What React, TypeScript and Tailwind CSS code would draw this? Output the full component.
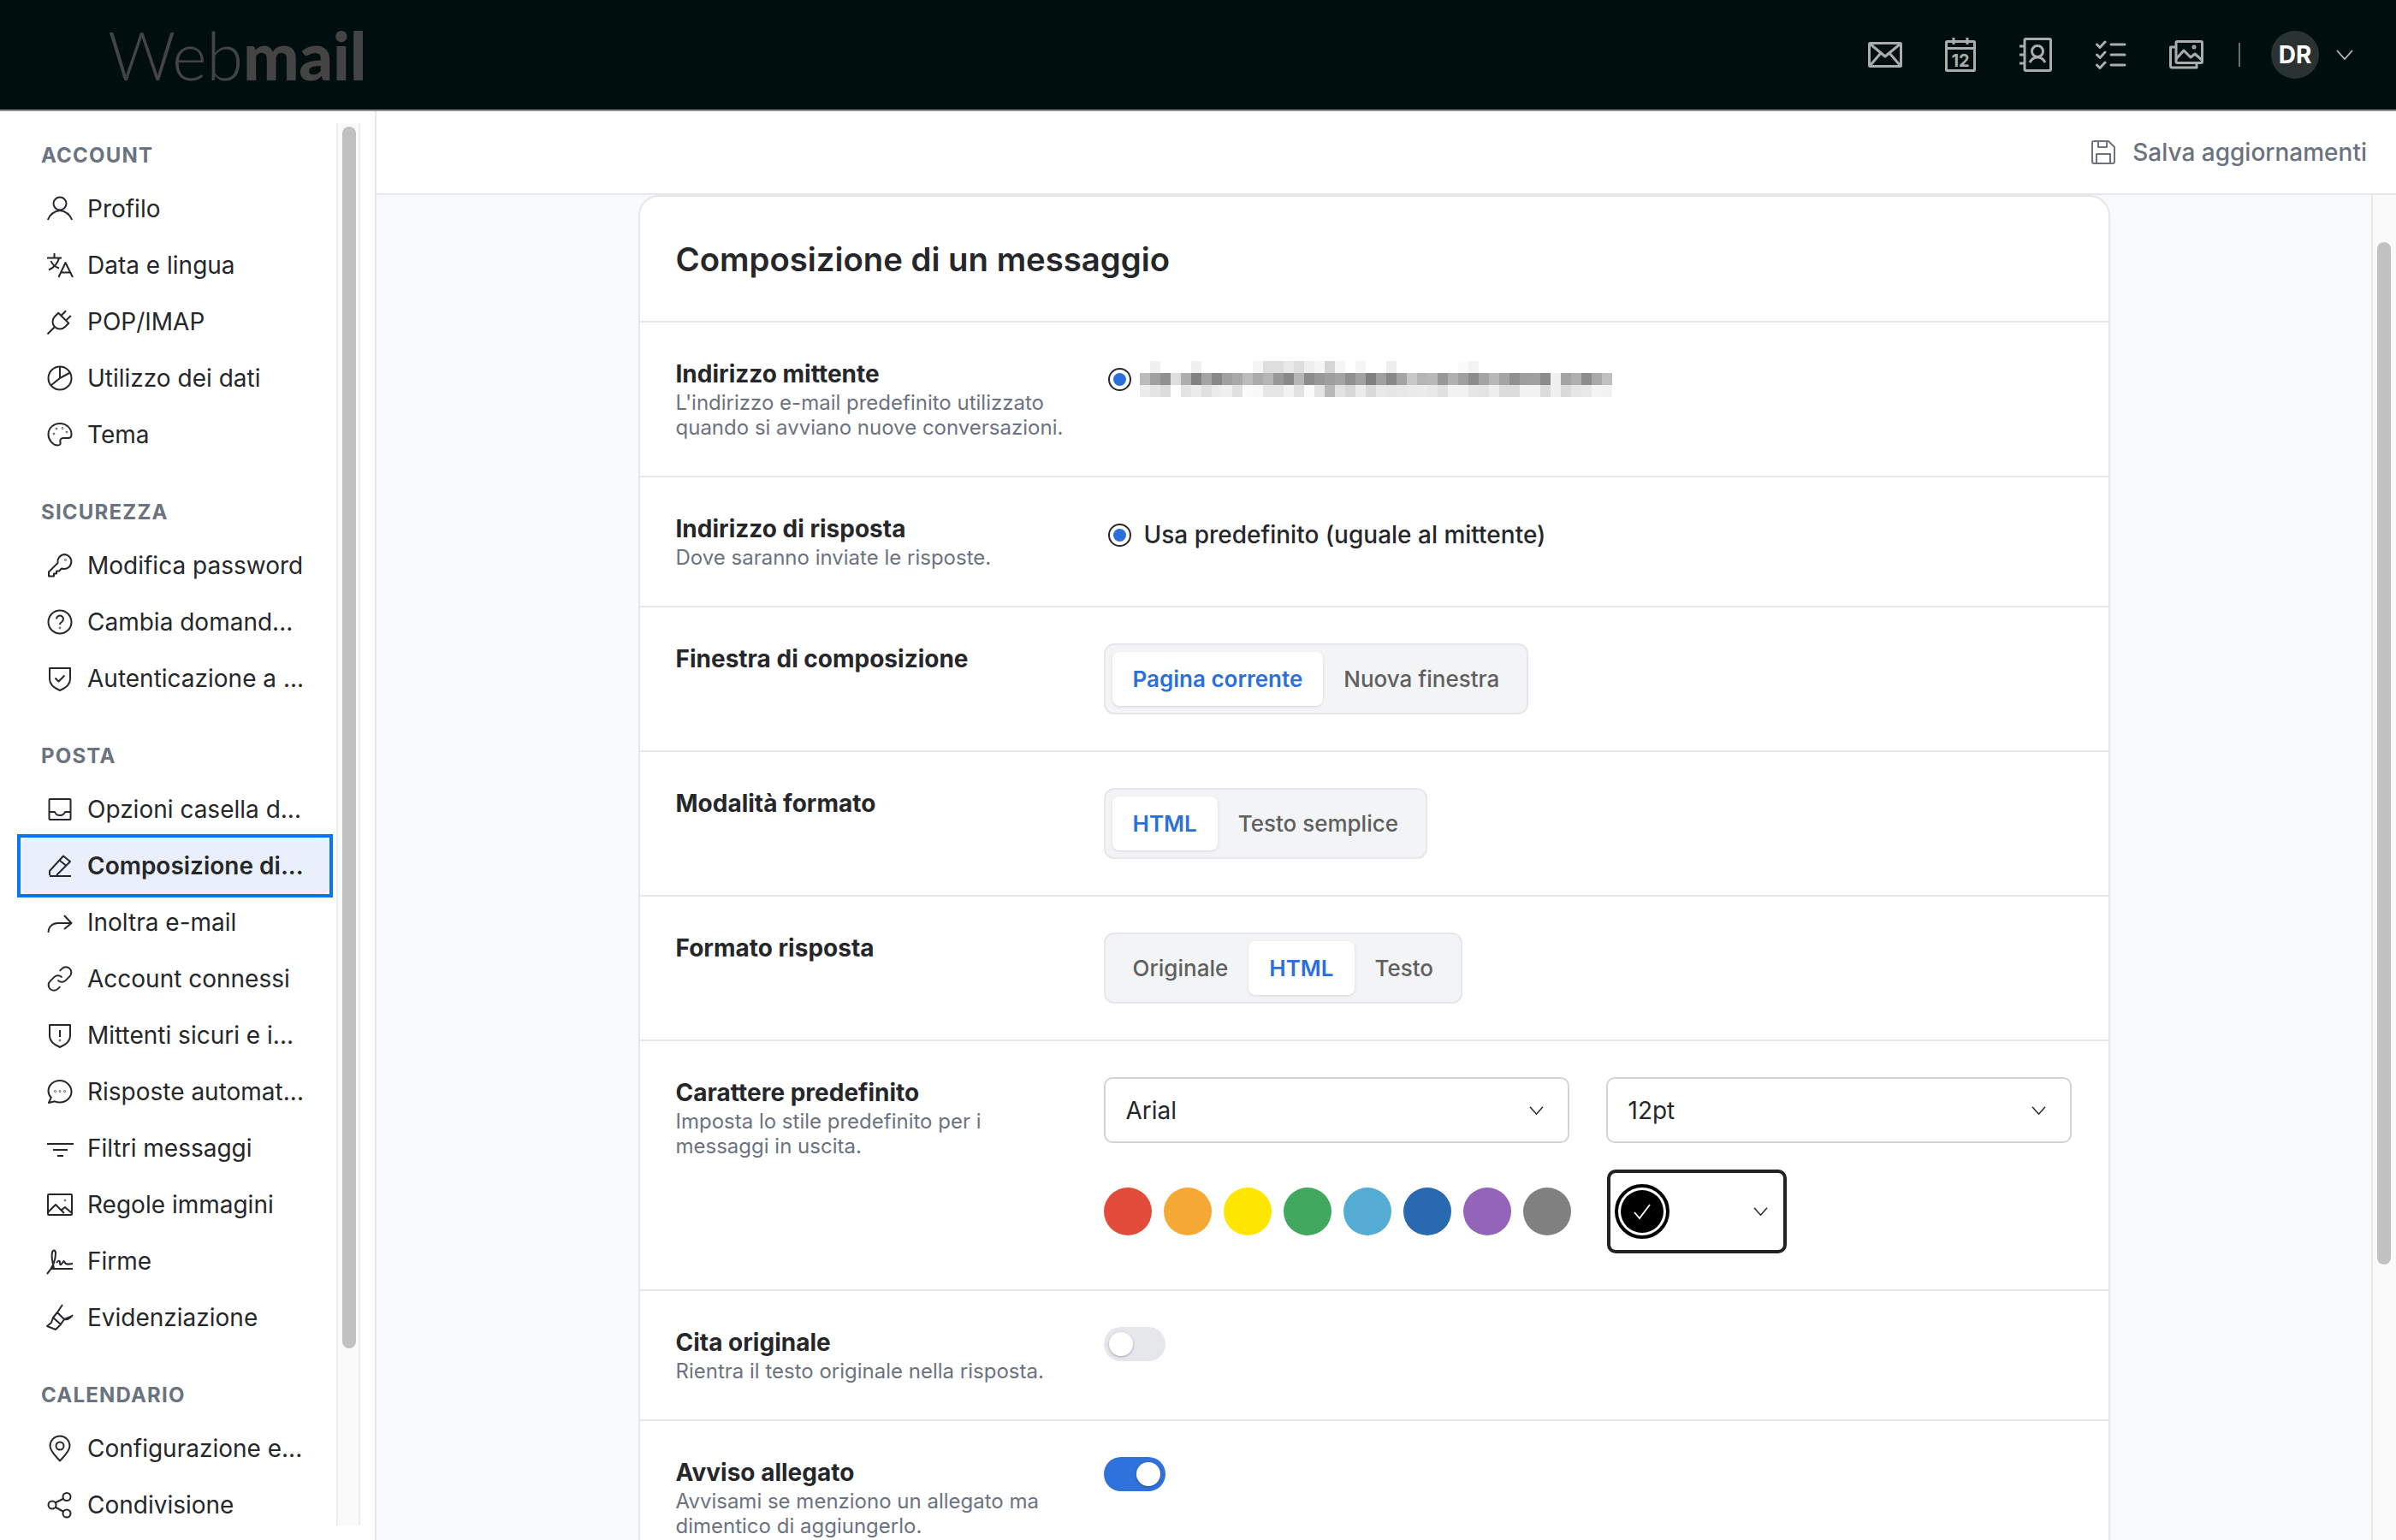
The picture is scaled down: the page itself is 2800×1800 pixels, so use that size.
import type { ReactNode } from 'react'

const icons: Record<string, ReactNode> = {
  user: (
    <>
      <circle cx="15" cy="9" r="7.500" />
      <path d="M1 28C3 22.500 8 18 15 17c7 1 12 5.500 14 11" />
    </>
  ),
  lang: <path d="M0 6.500h17M8.500 1v5.500M14 6.500C12.500 13 8.500 17.500 2 20.500M4.500 10c1.500 4 5 7 9.500 8.500M13.500 29l8-17 8.500 17M16.500 23.500h11" />,
  plug: (
    <g transform="rotate(45 15 15)">
      <path d="M6.500 9h17v6a8.500 8.500 0 0 1-17 0zM11 1v8M19 1v8M15 23.500v12" />
    </g>
  ),
  pie: (
    <>
      <circle cx="15" cy="15" r="13.500" />
      <path d="M15 1.500V15L27 8.500M15 15 4.500 23.500" />
    </>
  ),
  palette: (
    <>
      <path d="M15 2C7.500 2 1.500 7.500 1.500 14.500S7 27.500 12.500 27.500c2.500 0 3.500-1.500 3-3.500-.6-2.500.5-5 3.500-5h6c2.500 0 3.500-2 3.500-4.500C28.500 7.500 22.500 2 15 2z" />
      <circle cx="8" cy="14" r=".3" />
      <circle cx="11" cy="8" r=".3" />
      <circle cx="18" cy="7.500" r=".3" />
      <circle cx="23" cy="12" r=".3" />
    </>
  ),
  key: (
    <>
      <path d="M20 2a8.500 8.500 0 1 1-3 16.500L14 21.500h-3v3H8v3H2v-5l10.500-10.500A8.500 8.500 0 0 1 20 2z" />
      <circle cx="21.500" cy="8.500" r=".3" />
    </>
  ),
  help: (
    <>
      <circle cx="15" cy="15" r="13.500" />
      <path d="M11 11.500a4 4 0 1 1 6 3.500c-1.300.8-2 1.500-2 3" />
      <circle cx="15" cy="22" r=".3" />
    </>
  ),
  shieldCheck: <path d="M3 3h24v13c0 6-5 10-12 13C8 26 3 22 3 16zM9.500 14.500l4 4 7-7" />,
  inbox: (
    <>
      <rect x="2.500" y="3" width="25" height="24" rx="1" />
      <path d="M3 18h6c1 3 3 4 6 4s5-1 6-4h6" />
    </>
  ),
  pencil: <path d="M3 26v-5L19 3.500l8 6.500-16 16M14.500 8.500l8 6.500M3 27h25" />,
  forward: <path d="M1.500 27c0-7 5-11 11-11H28M20 7l8.500 9-8.500 7" />,
  link: <path d="M12.500 16.500a6 6 0 0 0 9 .6l5-5a6.300 6.300 0 0 0-9-9l-2.800 2.800M17.500 13.500a6 6 0 0 0-9-.6l-5 5a6.300 6.300 0 0 0 9 9l2.800-2.800" />,
  shieldAlert: (
    <>
      <path d="M3 3h24v13c0 6-5 10-12 13C8 26 3 22 3 16zM15 9v8" />
      <circle cx="15" cy="21" r=".3" />
    </>
  ),
  chat: (
    <>
      <path d="M15 2C7.500 2 1.500 7.500 1.500 14c0 3 1.200 5.700 3.200 7.800L2 28l7-1.700c1.800.8 3.900 1.200 6 1.200 7.500 0 13.500-5.800 13.500-12.500S22.500 2 15 2z" />
      <circle cx="9.500" cy="14.500" r=".3" />
      <circle cx="15" cy="14.500" r=".3" />
      <circle cx="20.500" cy="14.500" r=".3" />
    </>
  ),
  filter: <path d="M0 10h31M7 17h17M12 24h7" />,
  image: (
    <>
      <rect x="1" y="3" width="28" height="24" rx="1" />
      <path d="M1 24l9-9 10 10M17 21l4-3 8 7" />
      <circle cx="21" cy="10" r=".3" />
    </>
  ),
  sign: <path d="M0 30C7 22 10 15 10 6c0-4-3-5-4-1-1.500 6 1 13 2 19M11 17c2-3 4-3 4 0s1 3 3 0 2-2 3 0 3 2 9 1M4 24h26" />,
  marker: <path d="M18 0l-6 9 8 8 10-4M12 9l-5 6 9 8 4-6M7 15l-2 6-5 4 10 4 3-3 3-3M20 17c3 1 7-1 10-5" />,
  pin: (
    <>
      <path d="M15 29.500C10 24 3.500 18 3.500 12a11.500 11.500 0 0 1 23 0c0 6-6.500 12-11.500 17.500z" />
      <circle cx="15" cy="12" r="4.500" />
    </>
  ),
  share: (
    <>
      <circle cx="6" cy="15" r="4.500" />
      <circle cx="23" cy="5.500" r="4.500" />
      <circle cx="23" cy="25" r="4.500" />
      <path d="M9.500 12.500l10-5M9.500 17.500l10 5.500" />
    </>
  ),
}

const sections = [
  {
    title: 'Account',
    items: [
      ['user', 'Profilo'],
      ['lang', 'Data e lingua'],
      ['plug', 'POP/IMAP'],
      ['pie', 'Utilizzo dei dati'],
      ['palette', 'Tema'],
    ],
  },
  {
    title: 'Sicurezza',
    items: [
      ['key', 'Modifica password'],
      ['help', 'Cambia domand...'],
      ['shieldCheck', 'Autenticazione a ...'],
    ],
  },
  {
    title: 'Posta',
    items: [
      ['inbox', 'Opzioni casella d...'],
      ['pencil', 'Composizione di...'],
      ['forward', 'Inoltra e-mail'],
      ['link', 'Account connessi'],
      ['shieldAlert', 'Mittenti sicuri e i...'],
      ['chat', 'Risposte automat...'],
      ['filter', 'Filtri messaggi'],
      ['image', 'Regole immagini'],
      ['sign', 'Firme'],
      ['marker', 'Evidenziazione'],
    ],
  },
  {
    title: 'Calendario',
    items: [
      ['pin', 'Configurazione e...'],
      ['share', 'Condivisione'],
    ],
  },
]

const mosaic = [
  'ff f0 ff ff ff f0 ff ff ff ff ff f5 dd dd e8 dd ee f5 d5 f5 ff f5 ff ff ee ff ff ff ff ff ff fb f3 ff ff ff ff ff ff ff ff ff ff ff ff ff',
  'bb a0 90 dd ae 82 a4 88 a0 a8 bc aa b5 98 88 b5 8c 98 9e a4 90 a2 80 a0 88 a4 c8 b5 b8 98 b0 a0 8c a4 b8 a4 90 9e a0 8c f0 a4 b0 8c a8 c0',
  'ec e4 dc ff e4 ec e0 ec f0 e0 fb f8 e6 e6 f2 e2 fb e4 b8 e2 d8 ec da e8 e6 e8 ea ec e8 e0 f2 f2 e6 e4 ee dc dc f2 f2 dc f0 da e6 e8 f4 f2',
]
  .join(' ')
  .split(' ')

const swatches = [
  'bg-[#e34c3b]',
  'bg-[#f5a833]',
  'bg-[#ffe600]',
  'bg-[#41a85f]',
  'bg-[#54acd2]',
  'bg-[#2969b0]',
  'bg-[#9365b8]',
  'bg-[#808080]',
]

function Chevron({ className }: { className: string }) {
  return (
    <svg viewBox="0 0 20 12" fill="none" stroke="currentColor" strokeWidth="1.800" className={className}>
      <path d="M1 1l9 10 9-10" />
    </svg>
  )
}

function NavRow({ icon, label, active }: { icon: string; label: string; active?: boolean }) {
  return (
    <div
      className={`flex h-[66px] items-center gap-[17px] rounded-lg pl-[31px] text-[28px] text-[#25272b] ${
        active ? 'bg-[#e9f0fb] font-semibold' : 'mx-1'
      }`}
    >
      <svg viewBox="0 0 30 30" fill="none" stroke="currentColor" strokeWidth="2" strokeLinejoin="round" className="h-[30px] w-[30px] shrink-0 overflow-visible">
        {icons[icon]}
      </svg>
      <span className="whitespace-nowrap">{label}</span>
    </div>
  )
}

function Sidebar() {
  return (
    <aside className="flex w-[440px] shrink-0 border-r-2 border-[#e5e7eb] pb-[17px] pt-[14px]">
      <nav className="flex w-[393px] shrink-0 flex-col gap-[42px] overflow-hidden pl-5 pr-1 pt-[22px]">
        {sections.map((s) => (
          <div key={s.title}>
            <h3 className="mb-[13px] pl-[28px] text-[24px] font-bold uppercase leading-8 tracking-[0.05em] text-[#6b7280]">{s.title}</h3>
            {s.items.map(([icon, label]) =>
              label === 'Composizione di...' ? (
                <div key={label} className="-my-1 border-4 border-[#0a75f0]">
                  <NavRow icon={icon} label={label} active />
                </div>
              ) : (
                <NavRow key={label} icon={icon} label={label} />
              ),
            )}
          </div>
        ))}
      </nav>
      <div className="w-[28px] shrink-0 border-x-2 border-[#ededed] bg-[#fafafa] pl-[5px] pt-[4px]">
        <div className="h-[1428px] w-4 rounded-lg bg-[#c1c1c1]" />
      </div>
    </aside>
  )
}

function TopIcons() {
  return (
    <div className="flex items-center text-[#a9aeac]">
      <div className="flex w-[88px] justify-center">
        <svg viewBox="0 0 40 30" fill="none" stroke="currentColor" strokeWidth="3" strokeLinejoin="round" className="h-[30px] w-[40px]">
          <rect x="1.500" y="1.500" width="37" height="27" rx="1" />
          <path d="M2 2l18 15L38 2M2 28l13-15M38 28 25 13" />
        </svg>
      </div>
      <div className="flex w-[88px] justify-center">
        <svg viewBox="0 0 36 40" fill="none" stroke="currentColor" strokeWidth="3" strokeLinejoin="round" className="h-[40px] w-[36px]">
          <rect x="1.500" y="4.500" width="33" height="34" rx="1" />
          <path d="M1.500 12.500h33M10 0v8M26 0v8" />
          <text x="18" y="34" textAnchor="middle" fontSize="20" fontWeight="700" fill="currentColor" stroke="none" fontFamily="Inter, sans-serif">
            12
          </text>
        </svg>
      </div>
      <div className="flex w-[88px] justify-center">
        <svg viewBox="0 0 38 40" fill="none" stroke="currentColor" strokeWidth="3" strokeLinejoin="round" className="h-[40px] w-[38px]">
          <rect x="6" y="1.500" width="30.500" height="37" rx="1.500" />
          <path d="M0 10h6M0 20h6M0 30h6M12 29c2-4 5-6 9-6s7 2 9 6" />
          <circle cx="21" cy="16" r="6.500" />
        </svg>
      </div>
      <div className="flex w-[88px] justify-center">
        <svg viewBox="0 0 36 34" fill="none" stroke="currentColor" strokeWidth="3" strokeLinecap="round" className="h-[34px] w-[36px]">
          <path d="M1.500 5l3.500 3.500L11 2M1.500 17l3.500 3.500L11 14M1.500 29l3.500 3.500L11 26M18 5h16M18 17h16M18 29h16" strokeLinejoin="round" />
        </svg>
      </div>
      <div className="flex w-[88px] justify-center">
        <svg viewBox="0 0 40 34" fill="none" stroke="currentColor" strokeWidth="3" strokeLinejoin="round" className="h-[34px] w-[40px]">
          <rect x="8" y="1.500" width="30.500" height="25" rx="1.500" />
          <path d="M8 8H1.500v22a2 2 0 0 0 2 2H32v-5M8 22l9-10 8 8 5-4 8 7" />
          <circle cx="29" cy="8" r="1" />
        </svg>
      </div>
    </div>
  )
}

function Header() {
  return (
    <header className="flex h-[130px] shrink-0 items-center border-b-2 border-[#8c8e8d] bg-[#000f0d] pl-[126px] pr-[50px]">
      <div className="font-[Lato,sans-serif] text-[78px] leading-none tracking-[-0.005em] text-[#444444]">
        <span className="font-light">Web</span>
        <span className="font-black">mail</span>
      </div>
      <div className="ml-auto flex items-center">
        <TopIcons />
        <div className="ml-[17px] h-[28px] w-[2px] bg-[#6b706e]" />
        <div className="ml-[36px] flex h-14 w-14 items-center justify-center rounded-full bg-[#2a3331] text-[28px] font-bold text-white">DR</div>
        <Chevron className="ml-5 h-3 w-5 text-[#b7bbb9]" />
      </div>
    </header>
  )
}

function Segmented({ options, active }: { options: string[]; active: string }) {
  return (
    <div className="inline-flex h-[83px] items-center rounded-xl border-2 border-[#e5e7eb] bg-[#f3f4f6] px-2 text-[26px] font-medium">
      {options.map((o) => (
        <div
          key={o}
          className={
            o === active
              ? 'flex h-[63px] items-center rounded-lg bg-white px-6 font-semibold text-[#2b6fdb] shadow-[0_1px_3px_rgba(0,0,0,0.12)]'
              : 'flex h-[63px] items-center px-6 text-[#5f5f5f]'
          }
        >
          {o}
        </div>
      ))}
    </div>
  )
}

function Radio() {
  return (
    <div className="flex h-[27px] w-[27px] shrink-0 items-center justify-center rounded-full border-2 border-[#25272b] bg-white">
      <div className="h-[15px] w-[15px] rounded-full bg-[#2b6fdb]" />
    </div>
  )
}

function Toggle({ on }: { on?: boolean }) {
  return (
    <div className={`flex h-10 w-[72px] items-center rounded-full px-[6px] ${on ? 'justify-end bg-[#2f72db]' : 'bg-[#e5e7eb]'}`}>
      <div className="h-7 w-7 rounded-full bg-white shadow-[0_1px_3px_rgba(0,0,0,0.3)]" />
    </div>
  )
}

function Select({ value }: { value: string }) {
  return (
    <div className="flex h-[77px] flex-1 items-center justify-between rounded-[10px] border-2 border-[#d1d5db] bg-white pl-6 pr-7 text-[28px] text-[#25272b]">
      {value}
      <Chevron className="h-[10px] w-[17px] text-[#25272b]" />
    </div>
  )
}

function Row({ title, desc, children }: { title: string; desc?: string[]; children: ReactNode }) {
  return (
    <section className="flex border-b-2 border-[#e5e7eb] py-[42px] pl-[42px] pr-[43px]">
      <div className="w-[500px] shrink-0">
        <h2 className="text-[28px] font-bold leading-[37px] text-[#25272b]">{title}</h2>
        {desc?.map((line) => (
          <p key={line} className="text-[24px] leading-[29px] text-[#6b7280]">
            {line}
          </p>
        ))}
      </div>
      <div className="min-w-0 flex-1">{children}</div>
    </section>
  )
}

function Content() {
  return (
    <div className="flex min-h-0 flex-1">
      <div className="flex min-w-0 flex-1 justify-center overflow-hidden bg-[#f8f9fb]">
        <div className="h-fit w-[1720px] shrink-0 rounded-t-3xl border-x-2 border-t-2 border-[#e5e7eb] bg-white">
          <div className="flex h-[147px] items-center border-b-2 border-[#e5e7eb] pl-[42px] pt-[3px] text-[38.300px] font-semibold text-[#25272b]">
            Composizione di un messaggio
          </div>
          <Row title="Indirizzo mittente" desc={["L'indirizzo e-mail predefinito utilizzato", 'quando si avviano nuove conversazioni.']}>
            <div className="flex items-center gap-[10px] pl-[5px] pt-[3px]">
              <Radio />
              <div className="grid grid-cols-[repeat(46,12px)] grid-rows-[repeat(3,14px)]">
                {mosaic.map((v, i) => (
                  <div key={i} style={{ backgroundColor: `#${v}${v}${v}` }} />
                ))}
              </div>
            </div>
          </Row>
          <Row title="Indirizzo di risposta" desc={['Dove saranno inviate le risposte.']}>
            <div className="flex items-center gap-[15px] pl-[5px] pt-[4px] text-[28px] font-medium text-[#25272b]">
              <Radio />
              Usa predefinito (uguale al mittente)
            </div>
          </Row>
          <Row title="Finestra di composizione">
            <Segmented options={['Pagina corrente', 'Nuova finestra']} active="Pagina corrente" />
          </Row>
          <Row title="Modalità formato">
            <Segmented options={['HTML', 'Testo semplice']} active="HTML" />
          </Row>
          <Row title="Formato risposta">
            <Segmented options={['Originale', 'HTML', 'Testo']} active="HTML" />
          </Row>
          <Row title="Carattere predefinito" desc={['Imposta lo stile predefinito per i', 'messaggi in uscita.']}>
            <div className="flex gap-[43px]">
              <Select value="Arial" />
              <Select value="12pt" />
            </div>
            <div className="mt-[31px] flex items-center gap-[42px]">
              <div className="flex gap-[14px]">
                {swatches.map((c) => (
                  <div key={c} className={`h-14 w-14 rounded-full ${c}`} />
                ))}
              </div>
              <div className="flex h-[98px] w-[210px] items-center justify-between rounded-[10px] border-4 border-[#222222] pl-[5px] pr-[17px]">
                <div className="flex h-16 w-16 items-center justify-center rounded-full border-4 border-black p-[3px]">
                  <div className="flex h-full w-full items-center justify-center rounded-full bg-black">
                    <svg viewBox="0 0 24 24" fill="none" stroke="white" strokeWidth="1.800" className="h-6 w-6">
                      <path d="M3 13l6 7L21 4" />
                    </svg>
                  </div>
                </div>
                <Chevron className="h-[10px] w-[19px] text-[#25272b]" />
              </div>
            </div>
          </Row>
          <Row title="Cita originale" desc={['Rientra il testo originale nella risposta.']}>
            <Toggle />
          </Row>
          <Row title="Avviso allegato" desc={['Avvisami se menziono un allegato ma', 'dimentico di aggiungerlo.']}>
            <Toggle on />
          </Row>
        </div>
      </div>
      <div className="w-[29px] shrink-0 border-l-2 border-[#e8e8e8] bg-[#fafafa] pl-[5px] pt-[55px]">
        <div className="h-[1195px] w-4 rounded-lg bg-[#c1c1c1]" />
      </div>
    </div>
  )
}

export default function App() {
  return (
    <div className="flex h-screen w-full flex-col overflow-hidden bg-white font-[Inter,sans-serif]">
      <Header />
      <div className="flex min-h-0 flex-1">
        <Sidebar />
        <main className="flex min-w-0 flex-1 flex-col">
          <div className="flex h-[98px] shrink-0 items-center justify-end gap-5 border-b-2 border-[#e5e7eb] pr-[34px] text-[28px] font-medium text-[#6b7280]">
            <svg viewBox="0 0 28 28" fill="none" stroke="currentColor" strokeWidth="2" strokeLinejoin="round" className="h-7 w-7">
              <path d="M1 3a2 2 0 0 1 2-2h17l7 7v17a2 2 0 0 1-2 2H3a2 2 0 0 1-2-2zM8 1v7h10V1M6 27V16h16v11" />
            </svg>
            Salva aggiornamenti
          </div>
          <Content />
        </main>
      </div>
    </div>
  )
}
